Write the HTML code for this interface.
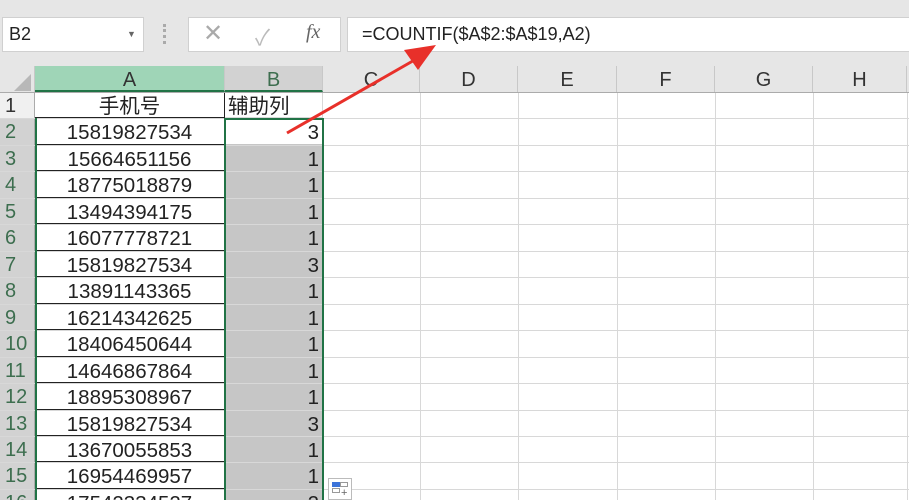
<!DOCTYPE html>
<html style="width:909px;height:500px;overflow:hidden"><head><meta charset="utf-8"><style>
*{box-sizing:border-box;margin:0;padding:0}
body{width:909px;height:500px;overflow:hidden;background:#fff;font-family:"Liberation Sans","Noto Sans CJK SC",sans-serif;position:relative}
.tb{position:absolute;left:0;top:0;width:909px;height:66px;background:#e6e6e6}
.box{position:absolute;background:#fff;border:1px solid #d0d0d0}
.hdr{position:absolute;top:66px;left:0;width:909px;height:27px;background:#e6e6e6;border-bottom:1px solid #ababab}
.hc{position:absolute;top:0;height:26px;text-align:center;font-size:20px;line-height:28px;color:#333;border-right:1px solid #c8c8c8}
.row{position:absolute;left:0;width:909px;height:26.46px;border-bottom:1px solid #d8d8d8}
.rh{position:absolute;left:0;top:0;width:35px;height:100%;background:#d2d2d2;color:#3d6e4f;font-size:20px;line-height:27px;padding-left:5px;border-right:1px solid #ababab}
.a{position:absolute;left:35px;top:0;width:190px;height:100%;text-align:center;font-size:20.5px;line-height:28px;color:#222;border-bottom:1.5px solid #222;border-right:1px solid #222}
.b{position:absolute;left:225px;top:0;width:98px;height:100%;background:#c6c6c6;text-align:right;padding-right:4px;font-size:20.5px;line-height:28px;color:#222;border-bottom:1px solid #c6c6c6}
.v{position:absolute;top:93px;height:407px;width:1px;background:#d8d8d8}
</style></head><body>
<div class="tb"></div>
<div class="box" style="left:2px;top:17px;width:142px;height:35px;font-size:18px;line-height:33px;padding-left:6px;color:#222">B2<span style="position:absolute;left:124px;top:0;font-size:9px;color:#666">▼</span></div>
<div style="position:absolute;left:163px;top:24px;width:3px;height:20px;border-left:3px dotted #aaa"></div>
<div class="box" style="left:188px;top:17px;width:153px;height:35px">
<span style="position:absolute;left:14px;top:1px;font-size:24px;color:#aaa">✕</span>
<span style="position:absolute;left:66px;top:2px;font-size:22px;color:#bbb">✓</span>
<span style="position:absolute;left:117px;top:3px;font-size:20px;font-style:italic;font-family:'Liberation Serif',serif;color:#666">fx</span></div>
<div class="box" style="left:347px;top:17px;width:570px;height:35px;font-size:18px;line-height:33px;padding-left:14px;color:#222">=COUNTIF($A$2:$A$19,A2)</div>
<div class="hdr">
<div style="position:absolute;left:14px;top:8px;width:0;height:0;border-left:17px solid transparent;border-bottom:17px solid #b8b8b8"></div>
<div class="hc" style="left:0;width:35px"></div>
<div class="hc" style="left:35px;width:190px;background:#9fd5b7;border-bottom:2px solid #217346">A</div>
<div class="hc" style="left:225px;width:98px;background:#d2d2d2;border-bottom:2px solid #217346;color:#3d6e4f">B</div>
<div class="hc" style="left:323px;width:97px">C</div>
<div class="hc" style="left:420px;width:98px">D</div>
<div class="hc" style="left:518px;width:99px">E</div>
<div class="hc" style="left:617px;width:98px">F</div>
<div class="hc" style="left:715px;width:98px">G</div>
<div class="hc" style="left:813px;width:94px">H</div>
</div>
<div class="v" style="left:420px"></div><div class="v" style="left:518px"></div><div class="v" style="left:617px"></div><div class="v" style="left:715px"></div><div class="v" style="left:813px"></div><div class="v" style="left:907px"></div>
<div class="row" style="top:93px"><div class="rh" style="background:#f0f0f0;color:#333">1</div><div class="a" style="border-bottom:1.5px solid #222">手机号</div><div class="b" style="background:#fff;text-align:left;padding-left:3px;border-right:1px solid #d8d8d8;border-bottom:1px solid #d8d8d8">辅助列</div></div>
<div class="row" style="top:119.46px"><div class="rh">2</div><div class="a">15819827534</div><div class="b" style="background:#fff">3</div></div>
<div class="row" style="top:145.92px"><div class="rh">3</div><div class="a">15664651156</div><div class="b">1</div></div>
<div class="row" style="top:172.38px"><div class="rh">4</div><div class="a">18775018879</div><div class="b">1</div></div>
<div class="row" style="top:198.84px"><div class="rh">5</div><div class="a">13494394175</div><div class="b">1</div></div>
<div class="row" style="top:225.3px"><div class="rh">6</div><div class="a">16077778721</div><div class="b">1</div></div>
<div class="row" style="top:251.76px"><div class="rh">7</div><div class="a">15819827534</div><div class="b">3</div></div>
<div class="row" style="top:278.22px"><div class="rh">8</div><div class="a">13891143365</div><div class="b">1</div></div>
<div class="row" style="top:304.68px"><div class="rh">9</div><div class="a">16214342625</div><div class="b">1</div></div>
<div class="row" style="top:331.14px"><div class="rh">10</div><div class="a">18406450644</div><div class="b">1</div></div>
<div class="row" style="top:357.6px"><div class="rh">11</div><div class="a">14646867864</div><div class="b">1</div></div>
<div class="row" style="top:384.06px"><div class="rh">12</div><div class="a">18895308967</div><div class="b">1</div></div>
<div class="row" style="top:410.52px"><div class="rh">13</div><div class="a">15819827534</div><div class="b">3</div></div>
<div class="row" style="top:436.98px"><div class="rh">14</div><div class="a">13670055853</div><div class="b">1</div></div>
<div class="row" style="top:463.44px"><div class="rh">15</div><div class="a">16954469957</div><div class="b">1</div></div>
<div class="row" style="top:489.9px;height:10px;border:none"><div class="rh">16</div><div class="a" style="border:none;border-right:1px solid #222">17542334527</div><div class="b">2</div></div>
<div style="position:absolute;left:35px;top:118px;width:2px;height:382px;background:#217346"></div>
<div style="position:absolute;left:224px;top:118px;width:100px;height:382px;border:2px solid #217346;border-bottom:none"></div>
<div style="position:absolute;left:328px;top:478px;width:24px;height:22px;background:#fff;border:1px solid #bbb">
<div style="position:absolute;left:3px;top:3px;width:8px;height:5px;background:#3b73d9"></div>
<div style="position:absolute;left:11px;top:3px;width:8px;height:5px;border:1px solid #999"></div>
<div style="position:absolute;left:3px;top:9px;width:8px;height:5px;border:1px solid #999"></div>
<span style="position:absolute;left:12px;top:8px;font-size:11px;color:#666">+</span></div>
<svg style="position:absolute;left:0;top:0" width="909" height="500"><line x1="287" y1="133" x2="418" y2="58" stroke="#e8302a" stroke-width="3"/><polygon points="436,45 404,50 418,70" fill="#e8302a"/></svg>
</body></html>
